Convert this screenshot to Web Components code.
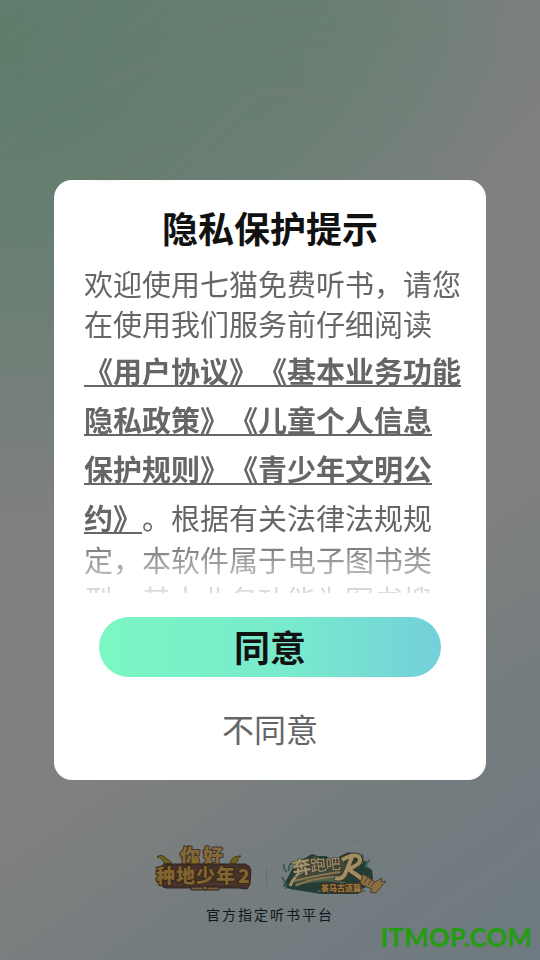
<!DOCTYPE html>
<html lang="zh-CN">
<head>
<meta charset="utf-8">
<meta name="viewport" content="width=device-width, initial-scale=1">
<title>隐私保护提示</title>
<style>
  body {
    margin: 0;
    font-family: "Noto Sans CJK SC", sans-serif;
    text-spacing-trim: space-all;
  }
</style>
</head>
<body>
<splash-screen>
  <privacy-dialog heading="隐私保护提示">
    <p>欢迎使用七猫免费听书，请您<br>在使用我们服务前仔细阅读<span class="terms"><a href="#user">《用户协议》</a><a href="#privacy">《基本业务功能<br>隐私政策》</a><a href="#children">《儿童个人信息<br>保护规则》</a><a href="#youth">《青少年文明公<br>约》</a>。根据有关法律法规规</span>定，本软件属于电子图书类<br>型，基本业务功能为图书搜</p>
  </privacy-dialog>
  <partner-footer slot="footer">官方指定听书平台</partner-footer>
  <site-mark slot="mark">ITMOP.COM</site-mark>
</splash-screen>

<script>
class SplashScreen extends HTMLElement {
  constructor() {
    super();
    this.shadowDOM = this.attachShadow({mode: 'open'});
  }

  connectedCallback() {
    this.render();
  }

  render() {
    this.shadowDOM.innerHTML = `
      <style>
        * {
          box-sizing: border-box;
        }

        :host {
          position: relative;
          display: grid;
          grid-template-rows: 1fr auto 1fr;
          min-height: 100vh;
          overflow: hidden;
          background:
            radial-gradient(ellipse 96% 52% at 0% 4%, #5d7d6b, rgba(97, 126, 110, .8) 40%, rgba(128, 128, 128, 0)),
            radial-gradient(ellipse 60% 24% at 54% 0%, rgba(96, 126, 112, .6), rgba(128, 128, 128, 0)),
            linear-gradient(145deg, #808080 62%, #747c7e 80%, #6e7a81);
        }

        .waves {
          position: absolute;
          top: 0;
          left: 0;
          width: 100%;
          fill: none;
          stroke: #7b7e76;
          stroke-linecap: round;
          filter: blur(2px);
        }

        main {
          grid-row: 2;
          padding: 0 10%;
        }

        footer {
          grid-row: 3;
        }
      </style>
      <svg class="waves" viewBox="0 0 540 180" aria-hidden="true">
        <g stroke-width="9" opacity=".16">
          <path d="M40-5C35 20 12 38-5 46M86-5C80 30 52 62 30 78M172-5C150 18 104 40 96 78"/>
          <path d="M5 150C24 112 92 96 122 76S170 72 192 46 270 10 350 8s70 12 80 24"/>
          <path d="M210 76C190 106 176 126 178 144c-8 10-22 0-40 14-14 10-24 22-42 24"/>
          <path d="M330 104C290 88 270 86 250 98c-24 14-34 38-60 54-10 8-14 18-26 28"/>
        </g>
        <g stroke-width="3" opacity=".4">
          <path d="M270 64C282 34 324 38 350 33c24-5 42 4 56 12"/>
          <path d="M326 103C292 92 268 86 250 100l-20 18c-12 8-16 24-38 36"/>
          <path d="M160 65c-26 4-42 12-54 23"/>
        </g>
      </svg>
      <main><slot></slot></main>
      <footer><slot name="footer"></slot></footer>
      <slot name="mark"></slot>
    `;
  }
}

class PrivacyDialog extends HTMLElement {
  constructor() {
    super();
    this.shadowDOM = this.attachShadow({mode: 'open'});
  }

  connectedCallback() {
    this.render();
    this.styleTerms();
  }

  // the terms text is slotted, so its links are styled from a sheet in the light tree
  styleTerms() {
    const style = document.createElement('style');
    style.textContent = `
      privacy-dialog p {
        margin: 0;
        white-space: nowrap;
      }

      privacy-dialog .terms {
        display: block;
        margin: 3px 0 -3px;
        line-height: 49px;
      }

      privacy-dialog a {
        color: inherit;
        font-weight: bold;
        text-decoration: underline;
        text-decoration-thickness: 2px;
        text-decoration-skip-ink: none;
        text-underline-offset: 2px;
      }
    `;
    document.head.appendChild(style);
  }

  render() {
    this.shadowDOM.innerHTML = `
      <style>
        * {
          box-sizing: border-box;
        }

        :host {
          display: block;
        }

        section {
          display: flex;
          flex-direction: column;
          padding: 23px 24px 28px 30px;
          border-radius: 18px;
          background: #fff;
          color: #666;
        }

        h1 {
          margin: 0 6px 12px 0;
          color: #111;
          font-size: 36px;
          font-weight: bold;
          line-height: 48px;
          text-align: center;
        }

        .content {
          height: 330px;
          overflow: hidden;
          font-size: 29px;
          line-height: 40px;
          -webkit-mask-image: linear-gradient(#000 calc(100% - 56px), rgba(0, 0, 0, .2));
          mask-image: linear-gradient(#000 calc(100% - 56px), rgba(0, 0, 0, .2));
        }

        .actions {
          display: flex;
          flex-direction: column;
          align-items: center;
          gap: 27px;
          margin: 24px 21px 0 15px;
        }

        button {
          border: 0;
          padding: 0;
          background: none;
          color: #666;
          font-family: inherit;
          font-size: 32px;
          line-height: 48px;
          cursor: pointer;
        }

        .agree {
          width: 100%;
          height: 60px;
          padding-bottom: 3px;
          border-radius: 30px;
          background: linear-gradient(90deg, #7bf7c3, #78e9cd 58%, #73d0da);
          color: #111;
          font-size: 36px;
          font-weight: bold;
        }
      </style>
      <section role="dialog" aria-labelledby="heading">
        <h1 id="heading">${this.getAttribute('heading')}</h1>
        <div class="content"><slot></slot></div>
        <div class="actions">
          <button class="agree" type="button">同意</button>
          <button type="button">不同意</button>
        </div>
      </section>
    `;
  }
}

class PartnerFooter extends HTMLElement {
  constructor() {
    super();
    this.shadowDOM = this.attachShadow({mode: 'open'});
  }

  connectedCallback() {
    this.render();
  }

  render() {
    this.shadowDOM.innerHTML = `
      <style>
        :host {
          display: flex;
          flex-direction: column;
          align-items: center;
          gap: 8px;
          padding-top: 66px;
          color: #111819;
          font-size: 14px;
          line-height: 20px;
          letter-spacing: 2px;
        }

        .logos {
          display: flex;
          align-items: center;
          gap: 12px;
        }

        svg {
          display: block;
          overflow: visible;
          letter-spacing: 0;
        }

        svg text {
          font-family: "Noto Sans CJK SC", sans-serif;
          font-weight: 900;
          paint-order: stroke;
          stroke-linejoin: round;
        }

        i {
          width: 1px;
          height: 18px;
          margin-top: 12px;
          background: #666e70;
        }
      </style>
      <div class="logos">
        <svg width="100" height="50" viewBox="-2 0 100 50" aria-hidden="true">
          <g fill="#71601c" stroke="#3d3818">
            <path d="M8 18c-1-5-3-6-7-7 3-3 7-1 9 1l6 5z"/>
            <path d="M74 18c1-6 5-8 11-8-2 2-4 3-3 5-2 1-2 3-3 3z"/>
          </g>
          <g font-size="20" fill="#83693a" stroke="#45321f" stroke-width="2">
            <text x="24" y="18">你</text>
            <text x="47" y="18">好</text>
          </g>
          <path d="M35 18l3-7 4 7z" fill="#86731a"/>
          <path d="M5 20l4-2h80l4 2 2 4-1 14-3 5-8-1H10l-3-1-3-6z" fill="#44302a" stroke="#30251f"/>
          <path d="M8 23h84M6 30h88M9 38h84" stroke="#563b2e" fill="none"/>
          <g font-size="19" fill="#81642f" stroke="#392816" stroke-width="2">
            <text x="0" y="37">种</text>
            <text x="20" y="37">地</text>
            <text x="40" y="37">少</text>
            <text x="60" y="37">年</text>
            <text x="82" y="37">2</text>
          </g>
          <path d="M35 41h28v3H35z" fill="#735d3b" stroke="#30251f"/>
          <circle cx="49" cy="42" r="2" fill="#776846" stroke="#30251f"/>
        </svg>
        <i></i>
        <svg width="108" height="50" viewBox="-1 0 108 50" aria-hidden="true">
          <path d="M3 40l5-9 7-13 10-6 7-4 6 2 8 0 7 4 9-5 7-3 6 3 5 5 6 1 0 5 6 4 1 8-2 7-9 4-4 5H41L10 43z" fill="#243c36"/>
          <path d="M26 14l8-4 7 4 9-2 7 5 9-7 8 6-5 11-24 9-32 3z" fill="#3d483b"/>
          <path d="M2 31q4 5 4 12M7 26q-4-3-3-8M9 25q-1-6 3-8M82 18q2-6 0-10M86 22q0-6 4-8" stroke="#405d52" stroke-width="2" fill="none"/>
          <path d="M15 40c20-8 34-6 50-3M26 34h34M38 45h47" stroke="#46614f" stroke-width="2" fill="none"/>
          <path d="M10 40q4-10 14-16" stroke="#a08d68" stroke-width="3" fill="none"/>
          <g fill="#a69470" stroke="#39372a" stroke-width="1">
            <text transform="rotate(-10 12 29)" x="13" y="30" font-size="19" style="font-weight: 700">奔</text>
            <text transform="rotate(-8 31 26)" x="31" y="26" font-size="16" style="font-weight: 400">跑</text>
            <text transform="rotate(-4 46 24)" x="46" y="24" font-size="15" style="font-weight: 400">吧</text>
          </g>
          <path d="M14 35c16-4 30-7 46-9M16 39c16-6 24-7 38-8" stroke="#8b754d" stroke-width="2" fill="none"/>
          <g fill="none" stroke-linejoin="round">
            <path d="M62 14q12-7 17-3c4 6-5 10-11 12q10 6 20 15M72 11l-7 17q-3 6-10 4" stroke="#3a3525" stroke-width="6"/>
            <path d="M62 14q12-7 17-3c4 6-5 10-11 12q10 6 20 15M72 11l-7 17q-3 6-10 4" stroke="#a18c64" stroke-width="4"/>
          </g>
          <path d="M83 28l12 8 7-4-1 4 5-1-10 12-6-1 2-3-12-5z" fill="#8b6f43" stroke="#4c402b"/>
          <path d="M84 37l5-7M88 39l4-6M91 41l4-6" stroke="#4d4029" fill="none"/>
          <path d="M73 1q2-2 4 0" stroke="#8c8b68" fill="none"/>
          <text x="41" y="45" font-size="8" fill="#9b783d" stroke="#3b3020" stroke-width="2">茶马古道篇</text>
        </svg>
      </div>
      <slot></slot>
    `;
  }
}

class SiteMark extends HTMLElement {
  constructor() {
    super();
    this.shadowDOM = this.attachShadow({mode: 'open'});
  }

  connectedCallback() {
    this.render();
  }

  render() {
    this.shadowDOM.innerHTML = `
      <style>
        :host {
          position: absolute;
          right: 8px;
          bottom: 6px;
          color: #279a14;
          font-family: Lato, sans-serif;
          font-size: 26px;
          font-weight: 900;
          line-height: 34px;
        }
      </style>
      <slot></slot>
    `;
  }
}

customElements.define('splash-screen', SplashScreen);
customElements.define('privacy-dialog', PrivacyDialog);
customElements.define('partner-footer', PartnerFooter);
customElements.define('site-mark', SiteMark);
</script>
</body>
</html>
